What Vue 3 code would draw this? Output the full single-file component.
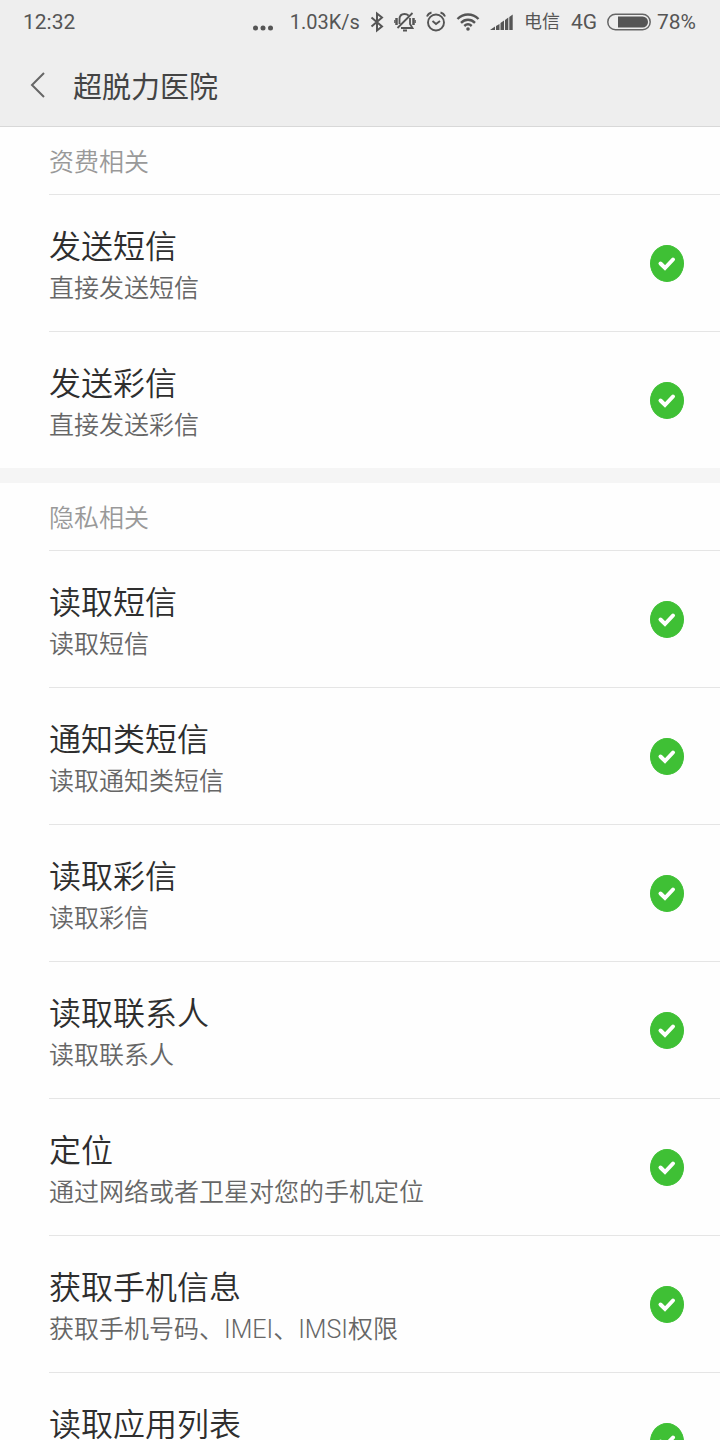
<script setup>
import { reactive } from 'vue'

const sections = reactive([
  {
    title: '资费相关',
    items: [
      { name: '发送短信', desc: '直接发送短信', allowed: true },
      { name: '发送彩信', desc: '直接发送彩信', allowed: true },
    ],
  },
  {
    title: '隐私相关',
    items: [
      { name: '读取短信', desc: '读取短信', allowed: true },
      { name: '通知类短信', desc: '读取通知类短信', allowed: true },
      { name: '读取彩信', desc: '读取彩信', allowed: true },
      { name: '读取联系人', desc: '读取联系人', allowed: true },
      { name: '定位', desc: '通过网络或者卫星对您的手机定位', allowed: true },
      { name: '获取手机信息', desc: '获取手机号码、IMEI、IMSI权限', allowed: true },
      { name: '读取应用列表', desc: '', allowed: true },
    ],
  },
])
</script>

<template>
  <div class="screen">
    <header class="top">
      <div class="status">
        <span class="clock">12:32</span>
        <div class="indicators">
          <svg class="dots" width="20" height="22" viewBox="0 0 20 22" aria-hidden="true">
            <circle cx="2.5" cy="17" r="2.5" /><circle cx="10" cy="17" r="2.5" /><circle cx="17.5" cy="17" r="2.5" />
          </svg>
          <span class="speed">1.03K/s</span>
          <svg class="line" width="14" height="22" viewBox="0 0 14 22" aria-hidden="true">
            <path d="M1.500 6.500L12 15.500L7 19.500V2.500L12 6.500L1.500 15.500" stroke-width="2" />
          </svg>
          <svg class="line" width="22" height="22" viewBox="0 0 22 22" aria-hidden="true">
            <path d="M3.500 17L18.500 2M5.500 13V8.500C5.500 5 7.500 3 10.500 3C12 3 13.500 3.500 14.500 4.500M16 7V13L18.500 17H7M9 19.500H13" stroke-width="1.800" />
            <path d="M2.500 7V14M19.500 7V14" stroke-width="2.500" />
            <path d="M.8 9V12M21.200 9V12" stroke-width="1.200" />
          </svg>
          <svg class="line" width="20" height="22" viewBox="0 0 20 22" aria-hidden="true">
            <circle cx="10" cy="11.500" r="8" stroke-width="1.900" />
            <path d="M6.500 10L10 13L14 10M1 5.500C1.800 3.500 3.500 2 5.500 1.500M19 5.500C18.200 3.500 16.500 2 14.500 1.500" stroke-width="1.900" />
          </svg>
          <svg class="line" width="24" height="22" viewBox="0 0 24 22" aria-hidden="true">
            <path d="M1.500 8C7.500 2 16.500 2 22.500 8M5 11.800C9 7.800 15 7.800 19 11.800M8.300 15C10.500 13 13.500 13 15.700 15" stroke-width="2.400" />
            <circle class="solid" cx="12" cy="18" r="1.800" />
          </svg>
          <svg class="bars" width="23" height="22" viewBox="0 0 23 22" aria-hidden="true">
            <path d="M0 19L5 15.500V19ZM6 15L9.500 13V19H6ZM10.500 12L14 9.500V19H10.500ZM15 9L18.300 6.500V19H15ZM19.300 6L22.700 3.500V19H19.300Z" />
          </svg>
          <span class="carrier">电信</span>
          <span class="network">4G</span>
          <svg class="battery" width="44" height="22" viewBox="0 0 44 22" aria-hidden="true">
            <rect x=".8" y="3.300" width="42.400" height="15.400" rx="7.700" />
            <path d="M11 5.500H35.500A5.500 5.500 0 0 1 35.500 16.500H11Z" />
          </svg>
          <span class="charge">78%</span>
        </div>
      </div>
      <div class="bar">
        <button class="back" type="button" aria-label="返回">
          <svg width="16" height="26" viewBox="0 0 16 26" aria-hidden="true">
            <path d="M14 1L2 13L14 25" />
          </svg>
        </button>
        <h1>超脱力医院</h1>
      </div>
    </header>

    <main class="list">
      <section v-for="section in sections" :key="section.title" class="group">
        <h2>{{ section.title }}</h2>
        <label v-for="item in section.items" :key="item.name" class="row">
          <span class="text">
            <span class="name">{{ item.name }}</span>
            <span class="desc">{{ item.desc }}</span>
          </span>
          <span class="toggle">
            <input v-model="item.allowed" type="checkbox" />
            <svg width="34" height="37" viewBox="0 0 34 37" aria-hidden="true">
              <path d="M10.500 18.500L15 23L23 14.500" />
            </svg>
          </span>
        </label>
      </section>
    </main>
  </div>
</template>

<style>
body {
  margin: 0;
  background: #fefefe;
}
</style>

<style scoped>
.screen {
  display: flex;
  flex-direction: column;
  height: 100vh;
  overflow: hidden;
  background: #fefefe;
  color: #2e2e2e;
  font-family: Roboto, "Noto Sans CJK SC", sans-serif;
}

.top {
  flex: none;
  background: #eee;
  border-bottom: 1px solid #d8d8d8;
  color: #555;
}

.status {
  display: flex;
  align-items: center;
  justify-content: space-between;
  height: 44px;
  padding: 0 24px 0 23px;
  font-size: 21px;
  line-height: 44px;
}

.indicators {
  display: flex;
  align-items: center;
}

.indicators svg {
  flex: none;
  fill: #555;
}

.indicators .line {
  fill: none;
  stroke: #555;
  margin-right: 10px;
}

.indicators .line .solid {
  fill: #555;
  stroke: none;
}

.indicators .dots {
  margin-right: 17px;
}

.speed {
  margin-right: 10px;
  font-size: 20px;
}

.carrier {
  margin: 0 11px 0 11px;
  font-size: 18px;
}

.indicators .battery {
  margin: 0 6px 0 10px;
}

.battery rect {
  fill: none;
  stroke: #666;
  stroke-width: 1.5;
}

.bar {
  display: flex;
  align-items: center;
  height: 82px;
}

.back {
  display: flex;
  align-items: center;
  justify-content: flex-end;
  width: 46px;
  height: 80px;
  margin-right: 27px;
  padding: 0;
  border: 0;
  background: none;
}

.back path {
  fill: none;
  stroke: #666;
  stroke-width: 2;
}

h1 {
  margin: 0;
  padding-top: 6px;
  color: #444;
  font-size: 29px;
  font-weight: 400;
  line-height: 76px;
}

.list {
  flex: 1;
  min-height: 0;
  overflow-y: auto;
  scrollbar-width: none;
}

.group + .group {
  border-top: 15px solid #f5f5f5;
}

h2 {
  margin: 0;
  padding: 4px 0 0 49px;
  color: #999;
  font-size: 25px;
  font-weight: 350;
  line-height: 63px;
}

.row {
  display: flex;
  align-items: center;
  justify-content: space-between;
  height: 136px;
  margin-left: 49px;
  padding-right: 36px;
  border-top: 1px solid #e5e5e5;
}

.text {
  display: flex;
  flex-direction: column;
  padding-top: 8px;
}

.name {
  font-size: 32px;
  font-weight: 350;
  line-height: 44px;
}

.desc {
  min-height: 40px;
  color: #666;
  font-size: 25px;
  font-weight: 350;
  line-height: 40px;
}

.toggle {
  display: grid;
}

.toggle input,
.toggle svg {
  grid-area: 1 / 1;
}

.toggle input {
  appearance: none;
  box-sizing: border-box;
  width: 34px;
  height: 37px;
  margin: 0;
  border: 1px solid #ccc;
  border-radius: 50%;
}

.toggle input:checked {
  border-color: #3fc035;
  background: #3fc035;
}

.toggle svg {
  pointer-events: none;
}

.toggle path {
  fill: none;
  stroke: #fff;
  stroke-width: 4;
  stroke-linecap: round;
}

.toggle input:not(:checked) + svg {
  visibility: hidden;
}
</style>
